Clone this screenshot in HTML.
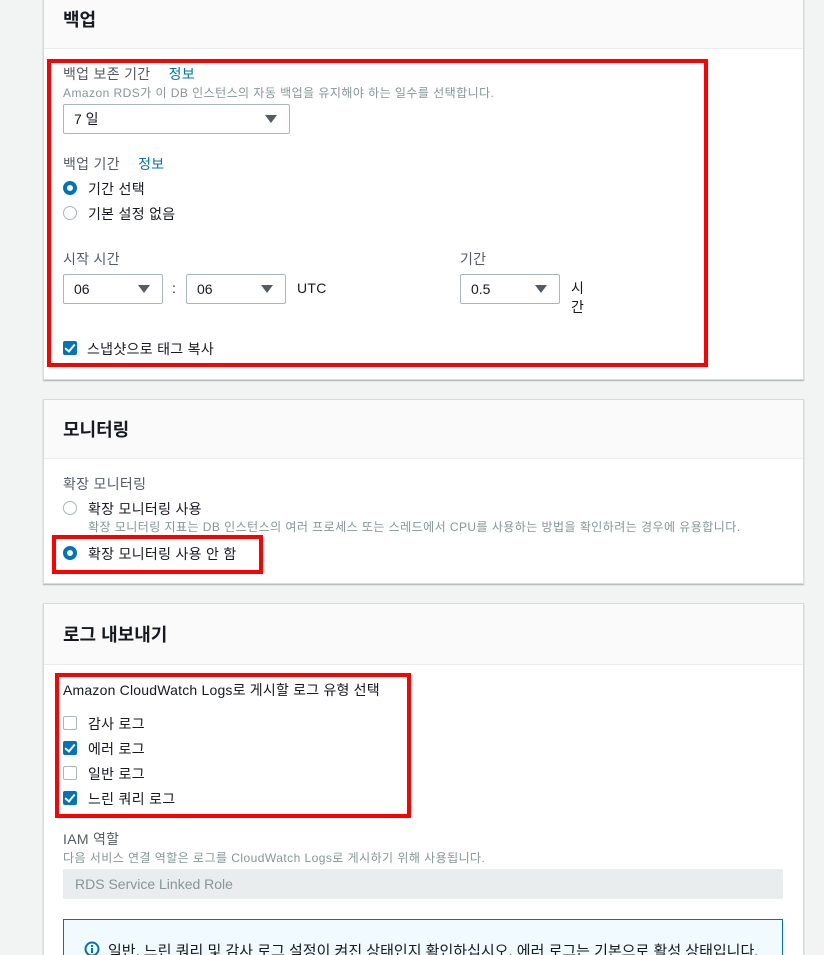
<!DOCTYPE html>
<html style="height:955px;overflow:hidden"><head><meta charset="utf-8"><style>
body{margin:0;width:824px;height:955px;overflow:hidden;background:#f2f3f3;font-family:"Liberation Sans","Noto Sans CJK KR",sans-serif;color:#16191f;position:relative}
.a{position:absolute;white-space:nowrap}
.panel{position:absolute;left:43px;width:759px;background:#fff;border:1px solid #d5dbdb;box-shadow:0 1px 1px rgba(0,28,36,.3)}
.hd{position:absolute;left:0;top:0;width:100%;background:#fafafa;border-bottom:1px solid #eaeded}
.h{font-size:18px;font-weight:bold;color:#16191f}
.lbl{font-size:14px;color:#545b64;letter-spacing:0.3px}
.desc{font-size:12px;color:#879596;letter-spacing:0.45px}
.link{color:#0073bb}
.sel{position:absolute;height:28px;border:1px solid #aab7b8;border-radius:2px;background:#fff;box-sizing:border-box;font-size:14px;line-height:26px;padding-left:10px}
.sel:after{content:"";position:absolute;right:12px;top:10px;border-left:6px solid transparent;border-right:6px solid transparent;border-top:8px solid #545b64}
.red{position:absolute;border:4px solid #f00;box-sizing:border-box}
.rad{position:absolute;width:12px;height:12px;border:1px solid #aab7b8;border-radius:50%;background:#fff}
.rad.on{border:4px solid #0073bb;width:6px;height:6px}
.cb{position:absolute;width:12px;height:12px;border:1px solid #aab7b8;border-radius:2px;background:#fff}
.cb.on{background:#0073bb;border-color:#0073bb}
.cb.on:after{content:"";position:absolute;left:3px;top:0px;width:4px;height:8px;border:solid #fff;border-width:0 2px 2px 0;transform:rotate(40deg)}
.t{font-size:14px;color:#16191f;letter-spacing:0.3px}
</style></head><body>

<div class="panel" style="top:-2px;height:380px">
  <div class="hd" style="height:49px"></div>
</div>
<div class="a h" style="left:63px;top:6px">백업</div>
<div class="red" style="left:47px;top:59px;width:661px;height:308px"></div>
<div class="a lbl" style="left:63px;top:64px">백업 보존 기간 <span class="link" style="margin-left:14px">정보</span></div>
<div class="a desc" style="left:63px;top:84px">Amazon RDS가 이 DB 인스턴스의 자동 백업을 유지해야 하는 일수를 선택합니다.</div>
<div class="sel" style="left:63px;top:104px;width:227px;height:30px;line-height:28px">7 일</div>
<div class="a lbl" style="left:63px;top:154px">백업 기간 <span class="link" style="margin-left:14px">정보</span></div>
<div class="rad on" style="left:63px;top:181px"></div><div class="a t" style="left:88px;top:179px">기간 선택</div>
<div class="rad" style="left:63px;top:206px"></div><div class="a t" style="left:88px;top:204px">기본 설정 없음</div>
<div class="a lbl" style="left:63px;top:249px">시작 시간</div>
<div class="sel" style="left:63px;top:274px;width:100px;height:30px;line-height:28px">06</div>
<div class="a t" style="left:172px;top:280px">:</div>
<div class="sel" style="left:186px;top:274px;width:100px;height:30px;line-height:28px">06</div>
<div class="a t" style="left:297px;top:280px">UTC</div>
<div class="a lbl" style="left:460px;top:249px">기간</div>
<div class="sel" style="left:460px;top:274px;width:100px;height:30px;line-height:28px">0.5</div>
<div class="a t" style="left:571px;top:279px;line-height:19px;white-space:normal;width:14px">시 간</div>
<div class="cb on" style="left:63px;top:341px"></div><div class="a t" style="left:87px;top:339px">스냅샷으로 태그 복사</div>

<div class="panel" style="top:399px;height:183px">
  <div class="hd" style="height:58px"></div>
</div>
<div class="a h" style="left:63px;top:416px">모니터링</div>
<div class="a lbl" style="left:63px;top:474px">확장 모니터링</div>
<div class="rad" style="left:63px;top:501px"></div><div class="a t" style="left:88px;top:499px">확장 모니터링 사용</div>
<div class="a desc" style="left:88px;top:518px">확장 모니터링 지표는 DB 인스턴스의 여러 프로세스 또는 스레드에서 CPU를 사용하는 방법을 확인하려는 경우에 유용합니다.</div>
<div class="red" style="left:52px;top:535px;width:211px;height:39px"></div>
<div class="rad on" style="left:63px;top:546px"></div><div class="a t" style="left:88px;top:544px">확장 모니터링 사용 안 함</div>

<div class="panel" style="top:603px;height:360px">
  <div class="hd" style="height:60px"></div>
</div>
<div class="a h" style="left:63px;top:621px">로그 내보내기</div>
<div class="red" style="left:55px;top:673px;width:356px;height:145px"></div>
<div class="a t" style="left:63px;top:680px;letter-spacing:0.2px">Amazon CloudWatch Logs로 게시할 로그 유형 선택</div>
<div class="cb" style="left:63px;top:716px"></div><div class="a t" style="left:88px;top:714px">감사 로그</div>
<div class="cb on" style="left:63px;top:741px"></div><div class="a t" style="left:88px;top:739px">에러 로그</div>
<div class="cb" style="left:63px;top:766px"></div><div class="a t" style="left:88px;top:764px">일반 로그</div>
<div class="cb on" style="left:63px;top:791px"></div><div class="a t" style="left:88px;top:789px">느린 쿼리 로그</div>
<div class="a lbl" style="left:63px;top:829px">IAM 역할</div>
<div class="a desc" style="left:63px;top:849px">다음 서비스 연결 역할은 로그를 CloudWatch Logs로 게시하기 위해 사용됩니다.</div>
<div class="a" style="left:63px;top:869px;width:720px;height:30px;background:#eaeded;border-radius:2px;font-size:14px;line-height:30px;color:#879596;box-sizing:border-box;padding-left:12px">RDS Service Linked Role</div>
<div class="a" style="left:63px;top:919px;width:720px;height:36px;background:#f1faff;border:1px solid #0073bb;border-bottom:none;box-sizing:border-box"></div>
<svg class="a" style="left:84px;top:941px" width="16" height="16" viewBox="0 0 16 16"><circle cx="8" cy="8" r="6.5" fill="none" stroke="#0073bb" stroke-width="2"/><rect x="7" y="7" width="2" height="5" fill="#0073bb"/><rect x="7" y="4" width="2" height="2" fill="#0073bb"/></svg>
<div class="a t" style="left:108px;top:940px;font-size:15px;letter-spacing:0">일반, 느린 쿼리 및 감사 로그 설정이 켜진 상태인지 확인하십시오. 에러 로그는 기본으로 활성 상태입니다.</div>
</body></html>
